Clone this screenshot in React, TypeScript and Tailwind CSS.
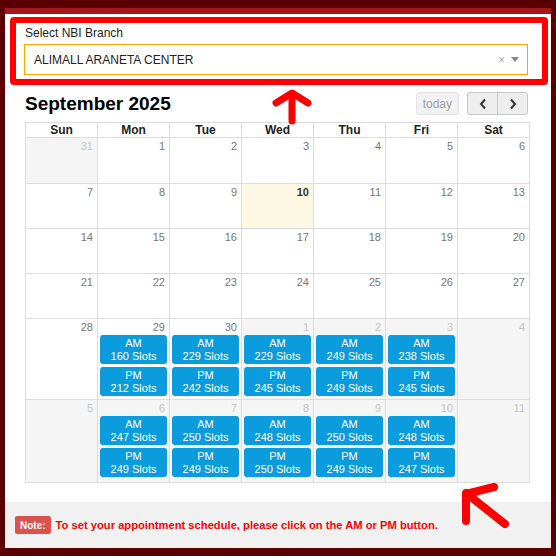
import React from 'react'

type Slot = { am: number; pm: number }
type Day = { n: number; other?: boolean; today?: boolean; slots?: Slot }

const weeks: Day[][] = [
  [{ n: 31, other: true }, { n: 1 }, { n: 2 }, { n: 3 }, { n: 4 }, { n: 5 }, { n: 6 }],
  [{ n: 7 }, { n: 8 }, { n: 9 }, { n: 10, today: true }, { n: 11 }, { n: 12 }, { n: 13 }],
  [{ n: 14 }, { n: 15 }, { n: 16 }, { n: 17 }, { n: 18 }, { n: 19 }, { n: 20 }],
  [{ n: 21 }, { n: 22 }, { n: 23 }, { n: 24 }, { n: 25 }, { n: 26 }, { n: 27 }],
  [
    { n: 28 },
    { n: 29, slots: { am: 160, pm: 212 } },
    { n: 30, slots: { am: 229, pm: 242 } },
    { n: 1, other: true, slots: { am: 229, pm: 245 } },
    { n: 2, other: true, slots: { am: 249, pm: 249 } },
    { n: 3, other: true, slots: { am: 238, pm: 245 } },
    { n: 4, other: true },
  ],
  [
    { n: 5, other: true },
    { n: 6, other: true, slots: { am: 247, pm: 249 } },
    { n: 7, other: true, slots: { am: 250, pm: 249 } },
    { n: 8, other: true, slots: { am: 248, pm: 250 } },
    { n: 9, other: true, slots: { am: 250, pm: 249 } },
    { n: 10, other: true, slots: { am: 248, pm: 247 } },
    { n: 11, other: true },
  ],
]

const rowHeights = ['h-[46px]', 'h-[45px]', 'h-[45px]', 'h-[45px]', 'h-[81px]', 'h-[83px]']

const SlotButton = ({ label, count }: { label: string; count: number }) => (
  <button className="w-full h-[29px] rounded-[3px] bg-[#0a9cdc] text-white text-[11px] leading-[13px] flex flex-col items-center justify-center">
    <span>{label}</span>
    <span>{count} Slots</span>
  </button>
)

const DayCell = ({ day }: { day: Day }) => {
  const bg = day.today ? 'bg-[#fcf8e3]' : day.other ? 'bg-[#f5f5f5]' : 'bg-white'
  const numColor = day.other ? 'text-[#c4c4c4]' : day.today ? 'text-[#333] font-bold' : 'text-[#777]'
  return (
    <div className={`border-r border-b border-[#dddddd] ${bg} flex flex-col`}>
      <div className={`text-right text-[11px] leading-[13px] pr-[4px] pt-[2px] ${numColor}`}>{day.n}</div>
      {day.slots && (
        <div className="flex flex-col gap-[3px] px-[2px] mt-[1px]">
          <SlotButton label="AM" count={day.slots.am} />
          <SlotButton label="PM" count={day.slots.pm} />
        </div>
      )}
    </div>
  )
}

export default function App() {
  return (
    <div className="relative w-[556px] h-[556px] bg-[#5a0000] pt-[8px] px-[5px] pb-[8px] font-['Liberation_Sans',Arial,sans-serif]">
      <div className="h-full bg-white border-t-[6px] border-[#a3181c] flex flex-col">
        {/* branch select (highlighted) */}
        <div className="ml-[5px] mr-[3px] mt-[3px] h-[68px] border-[6px] border-[#ff0000] rounded-[4px] pt-[3px] pl-[8px] pr-[14px]">
          <div className="text-[12px] leading-[15px] text-[#222] pl-[1px] mb-[3px]">Select NBI Branch</div>
          <div className="h-[31px] border border-[#ffa500] flex items-center pl-[9px] pr-[8px]">
            <span className="flex-1 text-[12px] text-[#222]">ALIMALL ARANETA CENTER</span>
            <span className="text-[#aaa] text-[12px] leading-none mr-[6px]">×</span>
            <span className="w-0 h-0 border-l-[4px] border-r-[4px] border-t-[5px] border-l-transparent border-r-transparent border-t-[#888]" />
          </div>
        </div>

        {/* calendar toolbar */}
        <div className="h-[37px] flex items-center justify-between pl-[20px] pr-[23px]">
          <h2 className="text-[19px] font-bold text-black leading-none">September 2025</h2>
          <div className="flex items-center gap-[8px]">
            <button className="h-[23px] px-[6px] rounded-[3px] border border-[#e3e3e3] bg-[#f2f2f2] text-[12px] text-[#a0a0a0]">today</button>
            <div className="flex h-[23px] rounded-[3px] border border-[#c8c8c8] bg-[#eeeeee] overflow-hidden">
              <button className="w-[30px] flex items-center justify-center border-r border-[#c8c8c8] text-[#333]">
                <svg width="8" height="12" viewBox="0 0 8 12"><path d="M6 1.5 L2 6 L6 10.5" fill="none" stroke="#333" strokeWidth="2" /></svg>
              </button>
              <button className="w-[29px] flex items-center justify-center text-[#333]">
                <svg width="8" height="12" viewBox="0 0 8 12"><path d="M2 1.5 L6 6 L2 10.5" fill="none" stroke="#333" strokeWidth="2" /></svg>
              </button>
            </div>
          </div>
        </div>

        {/* month grid */}
        <div className="ml-[20px] mr-[21px] border-l border-t border-[#dddddd]">
          <div className="grid grid-cols-7 h-[15px]">
            {['Sun', 'Mon', 'Tue', 'Wed', 'Thu', 'Fri', 'Sat'].map((d) => (
              <div key={d} className="border-r border-b border-[#dddddd] text-center text-[12px] leading-[14px] font-bold text-[#222]">{d}</div>
            ))}
          </div>
          {weeks.map((week, i) => (
            <div key={i} className={`grid grid-cols-7 ${rowHeights[i]}`}>
              {week.map((day, j) => <DayCell key={j} day={day} />)}
            </div>
          ))}
        </div>

        <div className="flex-1" />

        {/* note */}
        <div className="h-[46px] bg-[#f1f1f1] flex items-center pl-[10px] gap-[5px]">
          <span className="bg-[#d9534f] text-white text-[10px] font-bold px-[5px] h-[18px] flex items-center rounded-[2px]">Note:</span>
          <span className="text-[#ff0000] text-[11.2px] font-bold">To set your appointment schedule, please click on the AM or PM button.</span>
        </div>
      </div>

      {/* hand-drawn arrows */}
      <svg className="absolute inset-0 pointer-events-none" width="556" height="556" viewBox="0 0 556 556">
        <g fill="none" stroke="#ff0000" strokeLinecap="round" strokeLinejoin="round">
          <path d="M292 121 L292 94 M276 103 L292 93 L308 103" strokeWidth="7" />
          <path d="M505 524 L466 493 M466 521 L466 494 L494 487" strokeWidth="8" />
        </g>
      </svg>
    </div>
  )
}
